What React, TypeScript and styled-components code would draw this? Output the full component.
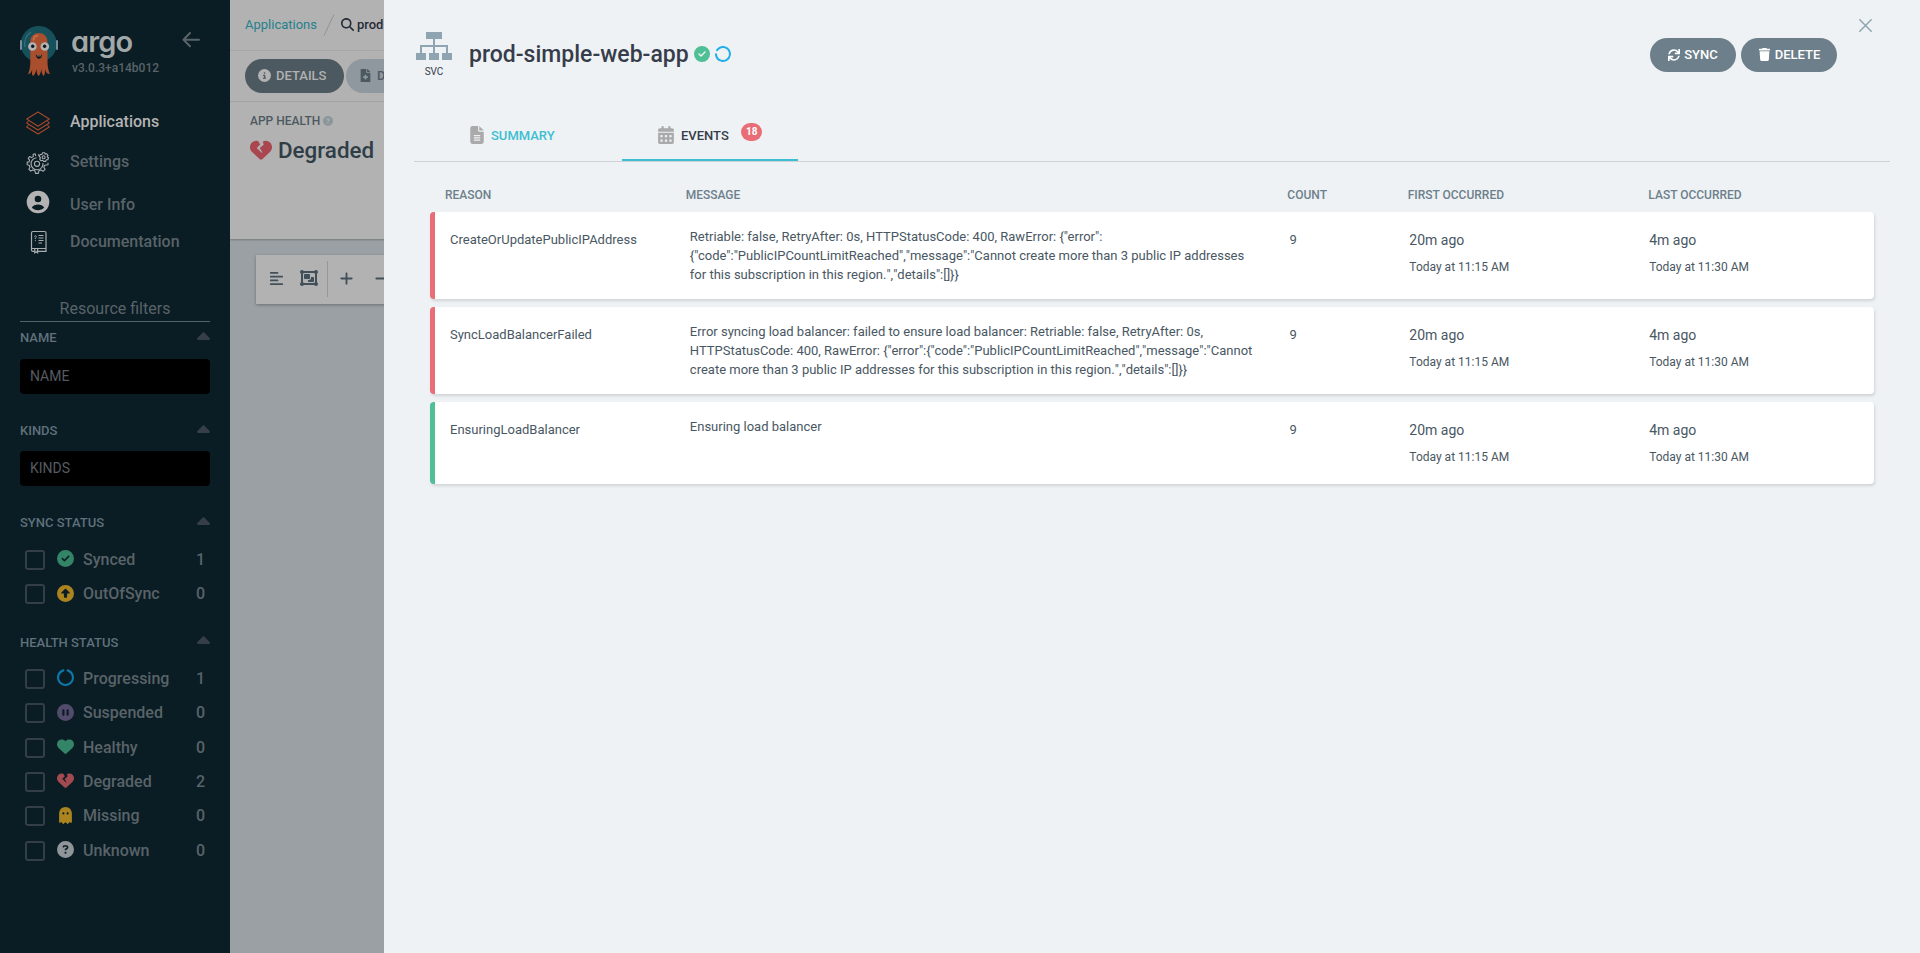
import React from 'react';
import styled, { createGlobalStyle } from 'styled-components';
import {
  FaCircleCheck, FaCircleUp, FaCircleNotch, FaCirclePause, FaHeart, FaHeartCrack,
  FaGhost, FaCircleQuestion, FaCircleInfo, FaFileLines, FaCalendarDays, FaMagnifyingGlass,
  FaAlignLeft, FaPlus, FaMinus, FaTrash, FaObjectGroup,
} from 'react-icons/fa6';
import { FaSync, FaFileMedical } from 'react-icons/fa';

const GlobalStyle = createGlobalStyle`
  * { box-sizing: border-box; }
  body { margin: 0; font-family: Roboto, "Liberation Sans", sans-serif; font-size: 13px; overflow: hidden; }
  svg { display: block; flex: none; }
`;

const Page = styled.div`
  display: flex;
  width: 1920px;
  height: 953px;
  overflow: hidden;
`;

/* ---------- Sidebar ---------- */

const Sidebar = styled.nav`
  width: 230px;
  flex: none;
  padding: 0 20px;
  background: #0a1c24;
  color: #596368;
`;

const SidebarHeader = styled.div`
  display: flex;
  height: 101px;
  padding-top: 25px;
`;

const Brand = styled.div`
  width: 111px;
  margin-left: 13px;
`;

const BrandName = styled.div`
  height: 39px;
  line-height: 34px;
  font-family: Inter, Roboto, sans-serif;
  font-feature-settings: "cv11", "ss03";
  font-weight: 600;
  font-size: 29px;
  letter-spacing: -0.9px;
  color: #a2a7a7;
`;

const Version = styled.div`
  margin-top: -4px;
  padding-left: 1px;
  line-height: 17px;
  font-size: 12px;
  font-weight: 500;
  white-space: nowrap;
`;

const NavItem = styled.a<{ $height: number; $active?: boolean }>`
  display: flex;
  align-items: center;
  height: ${(p) => p.$height}px;
  padding-left: 6px;
  font-size: 16px;
  font-weight: 500;
  color: ${(p) => (p.$active ? '#b3b3b3' : '#596368')};
`;

const NavIcon = styled.span<{ $shift: number }>`
  width: 44px;
  padding-top: ${(p) => Math.max(p.$shift, 0)}px;
  padding-bottom: ${(p) => Math.max(-p.$shift, 0)}px;
`;

const FilterTitle = styled.div`
  height: 26px;
  margin-top: 41px;
  line-height: 25px;
  border-bottom: 1px solid #53626a;
  text-align: center;
  font-size: 16px;
`;

const GroupHeader = styled.div<{ $gap: number }>`
  display: flex;
  align-items: center;
  justify-content: space-between;
  height: 20px;
  margin-top: ${(p) => p.$gap}px;
  font-weight: 500;
  color: #5f717b;
`;

const FilterInput = styled.div<{ $gap: number }>`
  height: 35px;
  margin-top: ${(p) => p.$gap}px;
  padding-left: 10px;
  border-radius: 4px;
  background: #000;
  color: #555b61;
  font-size: 14px;
  line-height: 34px;
`;

const CheckList = styled.div<{ $gap: number }>`
  padding: 0 5px;
  margin-top: ${(p) => p.$gap}px;
`;

const CheckRow = styled.label`
  display: flex;
  align-items: center;
  height: 34.4px;
  font-size: 16px;
  font-weight: 500;
`;

const CheckBox = styled.span`
  width: 20px;
  height: 20px;
  border: 2px solid #343e48;
  border-radius: 3px;
`;

const CheckIcon = styled.span<{ $color: string }>`
  display: flex;
  justify-content: center;
  width: 17px;
  margin: -2px 9px 0 12px;
  color: ${(p) => p.$color};
`;

const CheckLabel = styled.span`
  flex: 1;
  margin-top: -1px;
`;

const CheckCount = styled.span`
  width: 9px;
  margin-top: -1px;
  text-align: center;
`;

/* ---------- Application page behind the drawer ---------- */

const Main = styled.main`
  width: 154px;
  flex: none;
  overflow: hidden;
  white-space: nowrap;
  background: #9aa0a4;
  color: #2d3540;
`;

const TopBar = styled.div`
  display: flex;
  align-items: center;
  width: 600px;
  height: 51px;
  padding-left: 15px;
  background: #b2b2b2;
  border-bottom: 1px solid #a4a7a9;
`;

const Crumb = styled.span<{ $current?: boolean }>`
  display: flex;
  align-items: center;
  gap: 3px;
  padding-bottom: 2px;
  font-size: 13px;
  font-weight: ${(p) => (p.$current ? 500 : 400)};
  color: ${(p) => (p.$current ? '#262c38' : '#25808c')};
`;

const CrumbSlash = styled.svg`
  margin: 0 6px 0 6px;
`;

const MainButton = styled.button<{ $muted?: boolean }>`
  display: flex;
  align-items: center;
  gap: 5px;
  width: ${(p) => (p.$muted ? 90 : 99)}px;
  height: 34px;
  margin-right: 2px;
  padding: 0 0 1px 13px;
  border: 0;
  border-radius: 17px;
  font: 500 13px Roboto, sans-serif;
  background: ${(p) => (p.$muted ? '#8f989f' : '#4c5960')};
  color: ${(p) => (p.$muted ? '#4c5960' : '#b2b2b2')};
`;

const StatusPanel = styled.section`
  width: 600px;
  height: 137px;
  padding: 13px 20px;
  background: #b2b2b2;
  box-shadow: 0 1px 2px rgba(0, 0, 0, 0.25);
`;

const StatusTitle = styled.div`
  display: flex;
  align-items: center;
  gap: 3px;
  height: 12px;
  font-size: 12px;
  font-weight: 500;
  color: #4c5960;
  svg { color: #8b959c; }
`;

const StatusValue = styled.div`
  display: flex;
  align-items: center;
  gap: 6px;
  height: 28px;
  margin-top: 9px;
  font-size: 22.4px;
  font-weight: 500;
  color: #2f3d47;
`;

const GraphToolbar = styled.div`
  display: flex;
  align-items: center;
  width: 500px;
  height: 49px;
  margin: 16px 0 0 26px;
  padding: 0 0 3px 13px;
  background: #b2b2b2;
  box-shadow: 0 1px 3px rgba(0, 0, 0, 0.3);
  color: #42505a;
`;

const ToolSeparator = styled.span`
  width: 1px;
  height: 36px;
  margin: 1px 11px 0 9px;
  background: #92989c;
`;

const ToolGap = styled.span<{ $width: number }>`
  width: ${(p) => p.$width}px;
`;

/* ---------- Drawer ---------- */

const Drawer = styled.aside`
  flex: 1;
  background: #eef2f5;
  padding: 0 30px;
`;

const DrawerHeader = styled.header`
  display: flex;
  height: 93px;
`;

const Kind = styled.div`
  display: flex;
  flex-direction: column;
  align-items: center;
  width: 40px;
  padding-top: 32px;
  font-size: 10px;
  line-height: 12px;
  color: #363c4a;
  svg { margin-bottom: 6px; }
`;

const Title = styled.h1`
  display: flex;
  align-items: center;
  flex: 1;
  height: 32px;
  margin: 38px 0 0 15px;
  font-size: 23px;
  font-weight: 500;
  color: #363c4a;
`;

const StatusMark = styled.span<{ $color: string; $turn?: number }>`
  margin-left: 5px;
  color: ${(p) => p.$color};
  transform: rotate(${(p) => p.$turn ?? 0}deg);
`;

const Actions = styled.div`
  display: flex;
  gap: 5px;
  padding-top: 38px;
`;

const ActionButton = styled.button<{ $width: number }>`
  display: flex;
  align-items: center;
  justify-content: center;
  gap: 4px;
  width: ${(p) => p.$width}px;
  height: 34px;
  padding: 0 0 1px;
  border: 0;
  border-radius: 17px;
  background: #6d7f8b;
  color: #fff;
  font: 500 13px Roboto, sans-serif;
`;

const CloseButton = styled.span`
  margin: 18.5px 18.500px 0 21.500px;
`;

const Tabs = styled.div`
  display: flex;
  height: 69px;
  padding-left: 20px;
  border-bottom: 1px solid #ccd3d8;
`;

const Tab = styled.div<{ $active?: boolean; $width: number; $gap: number }>`
  display: flex;
  align-items: center;
  gap: ${(p) => p.$gap}px;
  width: ${(p) => p.$width}px;
  height: 68px;
  padding: 20px 0 ${(p) => (p.$active ? 2 : 4)}px ${(p) => (p.$active ? 35 : 34)}px;
  border-bottom: ${(p) => (p.$active ? '2px solid #3dbfd1' : '0')};
  font-weight: 500;
  color: ${(p) => (p.$active ? '#363c4a' : '#3dbfd1')};
  svg { color: #aaaaaa; }
`;

const Badge = styled.span`
  width: 21px;
  height: 18px;
  margin: -7px 0 0 6.5px;
  border-radius: 9px;
  background: #e96d76;
  color: #fff;
  font-size: 10px;
  font-weight: 700;
  line-height: 18px;
  text-align: center;
`;

const Events = styled.div`
  padding: 17px 16px 0;
`;

const EventGrid = styled.div`
  display: grid;
  grid-template-columns: 2fr 5fr 1fr 2fr 2fr;
`;

const HeadRow = styled(EventGrid)`
  height: 33px;
  line-height: 32px;
  font-size: 12px;
  font-weight: 500;
  color: #6d7f8b;
  > * { padding-left: 15px; }
`;

const EventRow = styled(EventGrid)<{ $color: string; $height: number }>`
  height: ${(p) => p.$height}px;
  margin-bottom: 8px;
  border-left: 5px solid ${(p) => p.$color};
  border-radius: 4px;
  background: #fff;
  box-shadow: 1px 2px 3px rgba(0, 0, 0, 0.12);
  color: #495763;
`;

const Cell = styled.div<{ $top?: number }>`
  padding: ${(p) => p.$top ?? 18}px 15px 0;
  line-height: 19px;
  white-space: nowrap;
`;

const Separator = styled.span`
  font-kerning: none;
`;

const Ago = styled.div`
  font-size: 14px;
  line-height: 20px;
`;

const Stamp = styled.div`
  margin-top: 7px;
  font-size: 12px;
  line-height: 20px;
`;

/* ---------- Drawings ---------- */

const Octopus = () => (
  <svg width="38" height="52" viewBox="0 0 38 52">
    <circle cx="18.7" cy="19" r="18" fill="#16505a" />
    <path d="M5 22A14.500 14.500 0 0 1 11 7" fill="none" stroke="#377078" strokeWidth="1.300" />
    <rect x="0" y="15" width="2" height="10" rx="1" fill="#788e9b" />
    <rect x="36" y="15" width="2" height="10" rx="1" fill="#788e9b" />
    <path d="M10.300 17C10.300 5 27.500 5 27.500 17V37C27.500 43 29 47 30 49C27 49 25.500 47 25 44C25 48 25 50 23.500 51C22 49 21.500 47 21.200 44C21 47 20 50 18.500 51C17 49 16.500 47 16.400 44C15.500 48 14.500 50 13 51C11.500 50 12 47 12.300 44C11.500 47 10.500 49 8 49C9.500 46 10.300 42 10.300 37Z" fill="#a94f2e" />
    <path d="M13.500 15C14 11.500 16 10.500 17.500 10.800" fill="none" stroke="#c47451" strokeWidth="1.600" strokeLinecap="round" />
    <circle cx="12.400" cy="21.500" r="4.300" fill="#b3b3b3" />
    <circle cx="24.800" cy="21.500" r="4.300" fill="#b3b3b3" />
    <circle cx="12.700" cy="21.300" r="1.700" fill="#10181c" />
    <circle cx="24.600" cy="21.300" r="1.700" fill="#10181c" />
    <path d="M15.800 29.500Q18.800 31.500 22 29.500Q21.500 33.800 19 33.800Q16.300 33.800 15.800 29.500Z" fill="#11181b" />
    <path d="M16.800 30.200Q18.900 31.200 21 30.200L20.800 31.300H17Z" fill="#b3b3b3" />
  </svg>
);

const LayersIcon = () => (
  <svg width="24" height="24" viewBox="0 0 24 24" fill="none" stroke="#a5492a" strokeWidth="1.100" strokeLinejoin="round">
    <path d="M12 1L23.300 8L12 15.200L.7 8Z" />
    <path d="M2.500 10L.7 12L12 19L23.300 12L21.500 10" />
    <path d="M2.500 14L.7 16L12 23L23.300 16L21.500 14" />
  </svg>
);

const GearsIcon = () => (
  <svg width="24" height="24" viewBox="0 0 24 24" fill="none" stroke="#a9adae" strokeWidth="1.100" strokeLinejoin="round">
    <path d="M12.500 4.800V3.200M9.800 5L9.200 2.800L7.200 3.400L7.200 5.600L5.600 6.600L3.600 5.600L2.200 7.400L3.600 9.200L3 11H1.200V13.700L3.200 14.200L4 16.200L2.800 18.200L4.600 20.100L6.700 18.900L8.900 19.800L9.500 22.400H12.300L12.900 19.800L15 18.900L17.100 20.300L19.100 18.400L17.800 16.200L18.700 14.200L22 13.700V11.800" />
    <path d="M10.500 6.800A6 6 0 1 0 17 12" />
    <circle cx="11" cy="12.800" r="2.600" />
    <circle cx="17.600" cy="6.200" r="1.500" />
    <path d="M16.600 1.700H18.700L19.200 3.100L20.800 2.700L22 4.400L21.200 5.700L22.500 6.700L21.800 8.700L20.200 8.800L19.800 10.400H17.600L16.700 9.300L15 9.800L13.700 8.200L14.400 6.700L13.200 5.500L14.200 3.500L15.800 3.500Z" />
  </svg>
);

const UserIcon = () => (
  <svg width="24" height="24" viewBox="0 0 24 24">
    <circle cx="12" cy="12" r="11.300" fill="#b3b3b3" />
    <circle cx="12" cy="9" r="3.300" fill="#0a1c24" />
    <path d="M5.800 17.500C8 13.500 16 13.500 18.200 17.500C15 21.200 9 21.200 5.800 17.500Z" fill="#0a1c24" />
  </svg>
);

const DocsIcon = () => (
  <svg width="24" height="24" viewBox="0 0 24 24" fill="none" stroke="#a9adae" strokeWidth="1.200">
    <path d="M5.500 18.500H20V3Q20 1.500 18.500 1.500H7Q5.500 1.500 5.500 3V20Q5.500 21.300 7 21.300H8.500M12 21.300H20V18.500" />
    <path d="M8.800 18.500V22.800L10.200 21.800L11.600 22.800V18.500" />
    <path d="M12.500 5.500H17.500M12.500 8H17.500M12.500 10.500H17.500M12.500 13H16" strokeWidth="1" />
    <path d="M8.300 6.500Q9.500 5 10.400 6.500Q10.400 7.500 9.400 8V9M9.400 10.200V11.200" strokeWidth="1" />
  </svg>
);

const Caret = ({ up = 3 }: { up?: number }) => (
  <svg width="13" height={8 + up} viewBox={`0 0 13 ${8 + up}`}>
    <path d="M5.700 .5Q6.500 -.2 7.300 .5L12.600 6Q13.400 7.700 11.800 8H1.200Q-.4 7.700 .4 6Z" fill="#363f47" />
  </svg>
);

const ServiceIcon = () => (
  <svg width="36" height="28" viewBox="0 0 36 28" fill="#8fa4b1">
    <path d="M10 0H26V7H19V13H32V21H30V15H19V21H17V15H6V21H4V13H17V7H10Z" />
    <rect x="0" y="21" width="10" height="7" />
    <rect x="13" y="21" width="10" height="7" />
    <rect x="26" y="21" width="10" height="7" />
  </svg>
);

/* ---------- Data ---------- */

const syncFilters = [
  { label: 'Synced', count: 1, color: '#348567', icon: <FaCircleCheck size={17} /> },
  { label: 'OutOfSync', count: 0, color: '#ab841f', icon: <FaCircleUp size={17} /> },
];

const healthFilters = [
  { label: 'Progressing', count: 1, color: '#0d77a8', icon: <FaCircleNotch size={17} /> },
  { label: 'Suspended', count: 0, color: '#534b6c', icon: <FaCirclePause size={17} /> },
  { label: 'Healthy', count: 0, color: '#348567', icon: <FaHeart size={17} /> },
  { label: 'Degraded', count: 2, color: '#a34a51', icon: <FaHeartCrack size={17} /> },
  { label: 'Missing', count: 0, color: '#ab841f', icon: <FaGhost size={17} /> },
  { label: 'Unknown', count: 0, color: '#8f9599', icon: <FaCircleQuestion size={17} /> },
];

const events = [
  {
    reason: 'CreateOrUpdatePublicIPAddress',
    color: '#e96d76',
    height: 87,
    lines: [
      'Retriable: false, RetryAfter: 0s, HTTPStatusCode: 400, RawError: {"error":',
      '{"code":"PublicIPCountLimitReached","message":"Cannot create more than 3 public IP addresses',
      'for this subscription in this region.","details":[]}}',
    ],
  },
  {
    reason: 'SyncLoadBalancerFailed',
    color: '#e96d76',
    height: 87,
    lines: [
      'Error syncing load balancer: failed to ensure load balancer: Retriable: false, RetryAfter: 0s,',
      'HTTPStatusCode: 400, RawError: {"error":{"code":"PublicIPCountLimitReached","message":"Cannot',
      'create more than 3 public IP addresses for this subscription in this region.","details":[]}}',
    ],
  },
  { reason: 'EnsuringLoadBalancer', color: '#4fbf95', height: 82, lines: ['Ensuring load balancer'] },
];

const MessageLine = ({ text }: { text: string }) => (
  <div>
    {text.split(/(\.?","|":"C)/).map((part, i) => (i % 2 ? <Separator key={i}>{part}</Separator> : part))}
  </div>
);

const FilterRows = ({ items, gap }: { items: typeof syncFilters; gap: number }) => (
  <CheckList $gap={gap}>
    {items.map((f) => (
      <CheckRow key={f.label}>
        <CheckBox />
        <CheckIcon $color={f.color}>{f.icon}</CheckIcon>
        <CheckLabel>{f.label}</CheckLabel>
        <CheckCount>{f.count}</CheckCount>
      </CheckRow>
    ))}
  </CheckList>
);

export default function App() {
  return (
    <Page>
      <GlobalStyle />
      <Sidebar>
        <SidebarHeader>
          <Octopus />
          <Brand>
            <BrandName>argo</BrandName>
            <Version>v3.0.3+a14b012</Version>
          </Brand>
          <svg width="18" height="30" viewBox="0 0 18 30" fill="none" stroke="#596368" strokeWidth="2" strokeLinecap="round" strokeLinejoin="round">
            <path d="M17 14.700H1.500M8 8L1.500 14.700L8 21.300" />
          </svg>
        </SidebarHeader>
        <NavItem $height={41} $active><NavIcon $shift={3}><LayersIcon /></NavIcon>Applications</NavItem>
        <NavItem $height={39}><NavIcon $shift={2}><GearsIcon /></NavIcon>Settings</NavItem>
        <NavItem $height={47}><NavIcon $shift={-5}><UserIcon /></NavIcon>User Info</NavItem>
        <NavItem $height={27}><NavIcon $shift={1}><DocsIcon /></NavIcon>Documentation</NavItem>

        <FilterTitle>Resource filters</FilterTitle>
        <GroupHeader $gap={5}>NAME<Caret /></GroupHeader>
        <FilterInput $gap={12}>NAME</FilterInput>
        <GroupHeader $gap={26}>KINDS<Caret /></GroupHeader>
        <FilterInput $gap={11}>KINDS</FilterInput>
        <GroupHeader $gap={26}>SYNC STATUS<Caret /></GroupHeader>
        <FilterRows items={syncFilters} gap={10.5} />
        <GroupHeader $gap={21.3}>HEALTH STATUS<Caret up={5} /></GroupHeader>
        <FilterRows items={healthFilters} gap={9} />
      </Sidebar>

      <Main>
        <TopBar>
          <Crumb>Applications</Crumb>
          <CrumbSlash width="12" height="22" viewBox="0 0 12 22"><path d="M1 21.500L11 .5" stroke="#8b959c" /></CrumbSlash>
          <Crumb $current><FaMagnifyingGlass size={13} />prod-simple-web-app</Crumb>
        </TopBar>
        <TopBar>
          <MainButton><FaCircleInfo size={13} />DETAILS</MainButton>
          <MainButton $muted><FaFileMedical size={13} />DIFF</MainButton>
        </TopBar>
        <StatusPanel>
          <StatusTitle>APP HEALTH <FaCircleQuestion size={10} /></StatusTitle>
          <StatusValue><FaHeartCrack size={22} color="#a9464f" />Degraded</StatusValue>
        </StatusPanel>
        <GraphToolbar>
          <FaAlignLeft size={15} />
          <ToolGap $width={16} />
          <FaObjectGroup size={18} />
          <ToolSeparator />
          <FaPlus size={15} />
          <ToolGap $width={20} />
          <FaMinus size={15} />
        </GraphToolbar>
      </Main>

      <Drawer>
        <DrawerHeader>
          <Kind><ServiceIcon />SVC</Kind>
          <Title>
            prod-simple-web-app
            <StatusMark $color="#4fbf95"><FaCircleCheck size={16} /></StatusMark>
            <StatusMark $color="#1fb0ec" $turn={-75}><FaCircleNotch size={16} /></StatusMark>
          </Title>
          <Actions>
            <ActionButton $width={86}><FaSync size={12} />SYNC</ActionButton>
            <ActionButton $width={96}><FaTrash size={13} />DELETE</ActionButton>
          </Actions>
          <CloseButton>
            <svg width="13" height="13" viewBox="0 0 13 13" stroke="#8fa4b1" strokeWidth="1.500" strokeLinecap="round">
              <path d="M.8 .8L12.200 12.200M12.200 .8L.8 12.200" />
            </svg>
          </CloseButton>
        </DrawerHeader>
        <Tabs>
          <Tab $width={188} $gap={5}><FaFileLines size={18} />SUMMARY</Tab>
          <Tab $width={176} $gap={6} $active><FaCalendarDays size={18} />EVENTS<Badge>18</Badge></Tab>
        </Tabs>
        <Events>
          <HeadRow>
            <span>REASON</span><span>MESSAGE</span><span>COUNT</span><span>FIRST OCCURRED</span><span>LAST OCCURRED</span>
          </HeadRow>
          {events.map((e) => (
            <EventRow key={e.reason} $color={e.color} $height={e.height}>
              <Cell>{e.reason}</Cell>
              <Cell $top={15}>{e.lines.map((l) => <MessageLine key={l} text={l} />)}</Cell>
              <Cell>9</Cell>
              <Cell><Ago>20m ago</Ago><Stamp>Today at 11:15 AM</Stamp></Cell>
              <Cell><Ago>4m ago</Ago><Stamp>Today at 11:30 AM</Stamp></Cell>
            </EventRow>
          ))}
        </Events>
      </Drawer>
    </Page>
  );
}
